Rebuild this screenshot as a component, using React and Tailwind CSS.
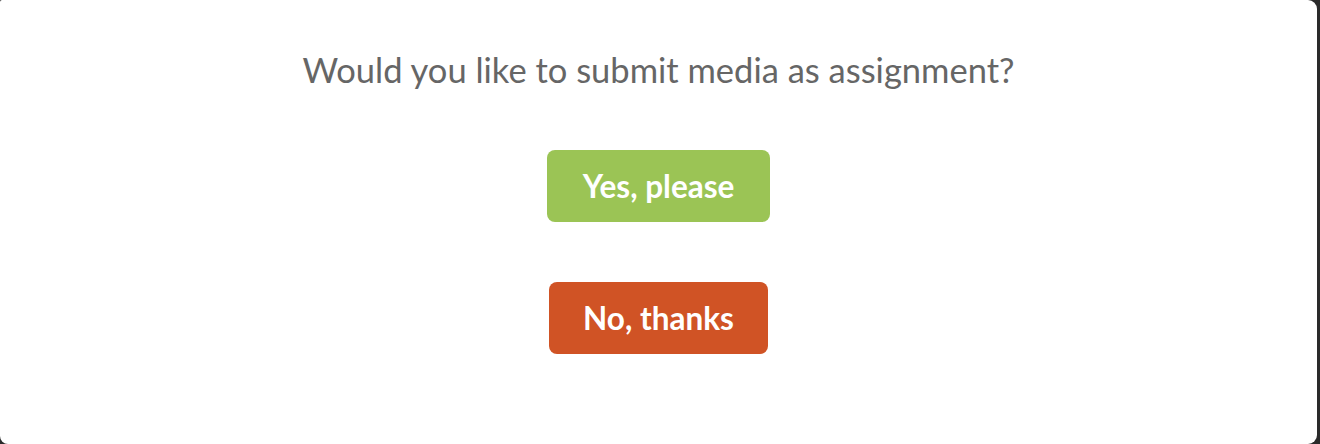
export default function App() {
  return (
    <div className="h-[444px] w-[1320px] overflow-hidden bg-[#2a2a2a]">
      <div
        className="flex h-[444px] w-[1317px] flex-col items-center rounded-r-[9px] rounded-bl-[8px] rounded-tl-[2px] bg-white pt-[48px]"
        style={{ fontFamily: "Lato, 'Open Sans', sans-serif" }}
      >
        <h2 className="text-[34.5px] leading-[44px] font-normal text-[#666666]">
          Would you like to submit media as assignment?
        </h2>
        <div className="mt-[58px] flex flex-col items-center gap-[60px]">
          <button
            type="button"
            className="flex h-[72px] items-center rounded-[8px] bg-[#9bc455] px-9 pt-[2px] text-[31.5px] font-bold text-white"
          >
            Yes, please
          </button>
          <button
            type="button"
            className="flex h-[72px] items-center rounded-[8px] bg-[#d05325] px-[34px] pt-[2px] text-[31.5px] font-bold text-white"
          >
            No, thanks
          </button>
        </div>
      </div>
    </div>
  );
}
